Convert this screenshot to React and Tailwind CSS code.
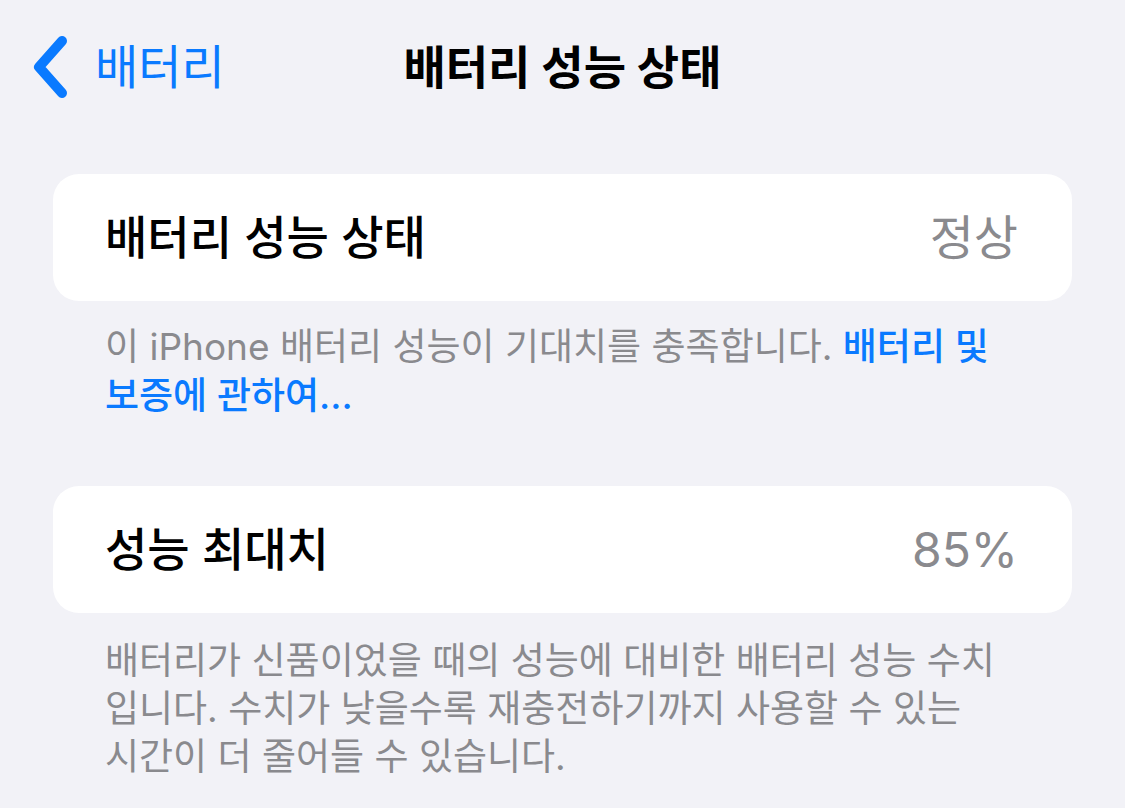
function Chevron() {
  return (
    <svg width="40" height="62" viewBox="0 0 40 62" fill="none">
      <path d="M31 5 L8 31 L31 57" stroke="#0a7aff" strokeWidth="10" strokeLinecap="round" strokeLinejoin="round" />
    </svg>
  )
}

function Row({ label, value }) {
  return (
    <div className="mx-[53px] h-[127px] bg-white rounded-[26px] flex items-center justify-between pl-[52px] pr-[54px]">
      <span className="text-[46px] font-medium text-black">{label}</span>
      <span className="text-[48px] text-[#8a8a8e]">{value}</span>
    </div>
  )
}

function App() {
  return (
    <div
      className="min-h-screen w-full bg-[#f2f2f7] overflow-hidden"
      style={{ fontFamily: '"Inter", "Noto Sans CJK KR", sans-serif' }}
    >
      <header className="h-[134px] grid grid-cols-[1fr_auto_1fr] items-center">
        <div className="flex items-center pl-[31px] gap-[24px] text-[#0a7aff]">
          <Chevron />
          <span className="text-[47px]">배터리</span>
        </div>
        <h1 className="text-[46px] font-bold text-black">배터리 성능 상태</h1>
        <div />
      </header>

      <main className="pt-[40px]">
        <Row label="배터리 성능 상태" value="정상" />
        <p className="mt-[21px] px-[105px] text-[37px] leading-[49px] text-[#8a8a8e] whitespace-nowrap">
          이 iPhone 배터리 성능이 기대치를 충족합니다.{' '}
          <span className="text-[#0a7aff] font-medium">
            배터리 및<br />보증에 관하여...
          </span>
        </p>

        <div className="mt-[66px]">
          <Row label="성능 최대치" value="85%" />
        </div>
        <p className="mt-[24px] px-[105px] text-[37px] leading-[48px] text-[#8a8a8e] whitespace-nowrap">
          배터리가 신품이었을 때의 성능에 대비한 배터리 성능 수치
          <br />
          입니다. 수치가 낮을수록 재충전하기까지 사용할 수 있는
          <br />
          시간이 더 줄어들 수 있습니다.
        </p>
      </main>
    </div>
  )
}

export default App
